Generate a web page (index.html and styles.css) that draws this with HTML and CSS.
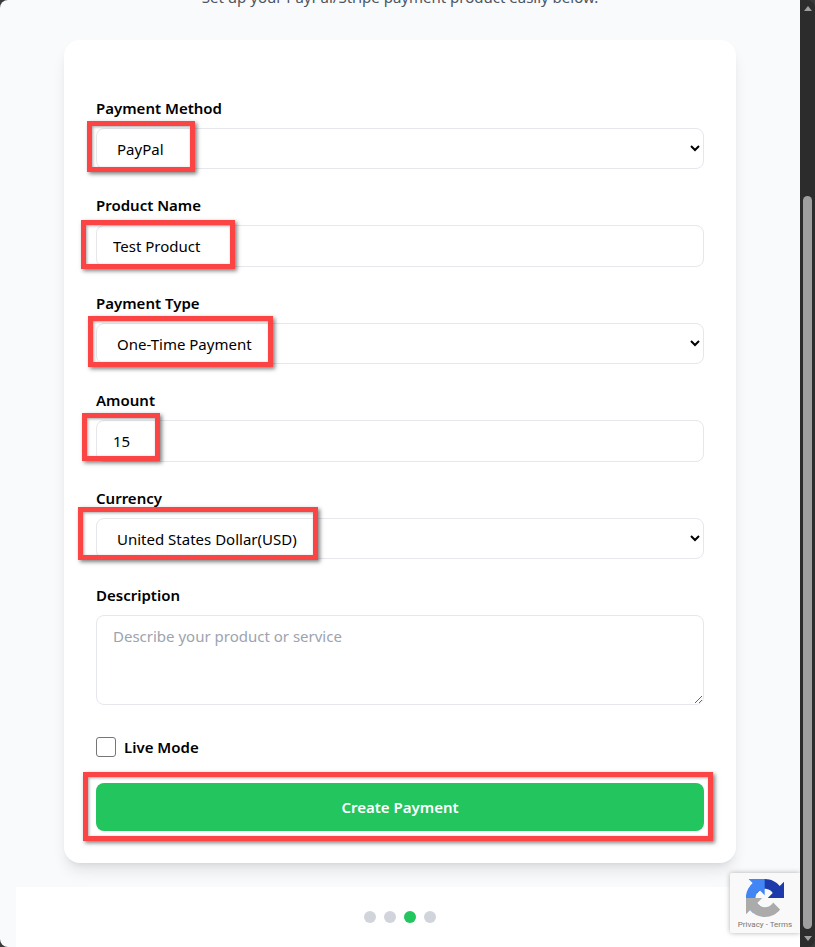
FILE: index.html
```html
<!DOCTYPE html>
<html lang="en">
<head>
    <meta charset="UTF-8">
    <meta name="viewport" content="width=device-width, initial-scale=1.0">
    <title>Create Payment</title>
    <link rel="stylesheet" href="styles.css">
</head>
<body>
    <div class="window">
        <main class="page">
            <p class="subtitle">Set up your PayPal/Stripe payment product easily below.</p>

            <form class="card">
                <div class="field">
                    <label for="method">Payment Method</label>
                    <select id="method"><option>PayPal</option><option>Stripe</option></select>
                </div>
                <div class="field">
                    <label for="product">Product Name</label>
                    <input id="product" type="text" value="Test Product">
                </div>
                <div class="field">
                    <label for="ptype">Payment Type</label>
                    <select id="ptype"><option>One-Time Payment</option><option>Subscription</option></select>
                </div>
                <div class="field">
                    <label for="amount">Amount</label>
                    <input id="amount" type="number" value="15">
                </div>
                <div class="field">
                    <label for="currency">Currency</label>
                    <select id="currency"><option>United States Dollar(USD)</option></select>
                </div>
                <div class="field">
                    <label for="desc">Description</label>
                    <textarea id="desc" placeholder="Describe your product or service"></textarea>
                </div>
                <label class="live"><span class="checkbox"></span>Live Mode</label>
                <button type="button" class="submit">Create Payment</button>

                <!-- red annotation boxes drawn on top of the form -->
                <span class="mark mark-method"></span>
                <span class="mark mark-product"></span>
                <span class="mark mark-type"></span>
                <span class="mark mark-amount"></span>
                <span class="mark mark-currency"></span>
                <span class="mark mark-submit"></span>
            </form>

            <div class="dots-bar">
                <span class="dot"></span>
                <span class="dot"></span>
                <span class="dot active"></span>
                <span class="dot"></span>
            </div>

            <div class="recaptcha">
                <svg class="recaptcha-logo" viewBox="0 0 64 64" width="38" height="38">
                    <path fill="#1c3aa9" d="M64 31.955l-.033-1.37V4.687l-7.16 7.16C50.948 4.674 42.033.093 32.05.093c-10.4 0-19.622 4.96-25.458 12.64l11.736 11.86a15.55 15.55 0 0 1 4.754-5.334c2.05-1.6 4.952-2.906 8.968-2.906.485 0 .86.057 1.135.163 4.976.393 9.288 3.14 11.828 7.124l-8.307 8.307 32.295.008"/>
                    <path fill="#4285f4" d="M31.577.093l-1.37.033H4.3l7.16 7.16C4.24 13.145-.344 22.06-.344 32.043c0 10.4 4.96 19.622 12.64 25.458l11.86-11.736a15.55 15.55 0 0 1-5.334-4.754c-1.6-2.05-2.906-4.952-2.906-8.968 0-.485.057-.86.163-1.135.393-4.976 3.14-9.288 7.124-11.828l8.307 8.307.008-32.295"/>
                    <path fill="#ababab" d="M.001 32.045l.033 1.37v25.898l7.16-7.16c5.86 7.173 14.774 11.754 24.76 11.754 10.4 0 19.622-4.96 25.458-12.64L45.677 39.407a15.55 15.55 0 0 1-4.754 5.334c-2.05 1.6-4.952 2.906-8.968 2.906-.485 0-.86-.057-1.135-.163-4.976-.393-9.288-3.14-11.828-7.124l8.307-8.307-32.295-.008"/>
                </svg>
                <span class="recaptcha-links">Privacy - Terms</span>
            </div>
        </main>

        <div class="scrollbar">
            <span class="arrow arrow-up"></span>
            <div class="track"><span class="thumb"></span></div>
            <span class="arrow arrow-down"></span>
        </div>
    </div>
</body>
</html>
```

FILE: styles.css
```css
* {
    box-sizing: border-box;
}

html, body {
    margin: 0;
    height: 100%;
    overflow: hidden;
}

body {
    font-family: 'Noto Sans', 'Open Sans', sans-serif;
    background: #3a3a3a;
    color: #111827;
}

.window {
    display: flex;
    height: 947px;
}

.page {
    position: relative;
    flex: 1;
    min-width: 0;
    background: #f9fafb;
    border-radius: 8px 0 0 8px;
    overflow: hidden;
}

.subtitle {
    margin: -13px 0 0;
    height: 53px;
    font-size: 15px;
    line-height: 20px;
    text-align: center;
    color: #4b5563;
}

.card {
    position: relative;
    width: 672px;
    height: 823px;
    margin: 0 0 0 64px;
    padding: 58px 32px 0;
    background: #fff;
    border-radius: 16px;
    box-shadow: 0 10px 15px -3px rgba(0, 0, 0, 0.1), 0 4px 6px -4px rgba(0, 0, 0, 0.1);
}

.field {
    margin-bottom: 26px;
}

.field label {
    display: block;
    height: 20px;
    margin-bottom: 10px;
    font-size: 15px;
    line-height: 20px;
    font-weight: 600;
    color: #000;
}

.field select,
.field input,
.field textarea {
    display: block;
    width: 100%;
    height: 42px;
    padding: 0 16px;
    border: 1px solid #e5e7eb;
    border-radius: 8px;
    background-color: #fff;
    font-family: inherit;
    font-size: 15px;
    color: #000;
    outline: none;
}

.field select {
    height: 41px;
    padding-left: 20px;
    margin-bottom: 1px;
    appearance: none;
    background-image: url("data:image/svg+xml,%3Csvg xmlns='http://www.w3.org/2000/svg' width='10' height='7'%3E%3Cpath d='M1 1l4 4 4-4' fill='none' stroke='%23000' stroke-width='2'/%3E%3C/svg%3E");
    background-repeat: no-repeat;
    background-position: right 3px center;
}

.field input[type="number"] {
    appearance: textfield;
}

.field textarea {
    height: 90px;
    padding-top: 10px;
    resize: vertical;
}

.field textarea::placeholder {
    color: #9ca3af;
}

.live {
    display: flex;
    align-items: center;
    gap: 8px;
    height: 20px;
    margin-top: 32px;
    font-size: 15px;
    font-weight: 600;
    color: #000;
}

.checkbox {
    width: 20px;
    height: 20px;
    border: 1px solid #767676;
    border-radius: 3px;
    background: #fff;
}

.submit {
    display: block;
    width: 100%;
    height: 48px;
    margin-top: 26px;
    border: none;
    border-radius: 8px;
    background: #22c55e;
    color: #fff;
    font-family: inherit;
    font-size: 15px;
    font-weight: 600;
    cursor: pointer;
}

.mark {
    position: absolute;
    border: 5px solid #fb4444;
    box-shadow: 2px 2px 4px rgba(0, 0, 0, 0.5), inset 1px 1px 3px rgba(0, 0, 0, 0.35);
    pointer-events: none;
}

.mark-method { left: 23px; top: 81px; width: 108px; height: 51px; }
.mark-product { left: 17px; top: 180px; width: 154px; height: 49px; }
.mark-type { left: 24px; top: 276px; width: 185px; height: 51px; }
.mark-amount { left: 18px; top: 373px; width: 78px; height: 48px; }
.mark-currency { left: 14px; top: 467px; width: 240px; height: 53px; }
.mark-submit { left: 19px; top: 732px; width: 630px; height: 69px; }

.dots-bar {
    display: flex;
    justify-content: center;
    align-items: center;
    gap: 8px;
    height: 60px;
    margin: 24px 0 0 16px;
    padding-right: 16px;
    background: #fff;
}

.dot {
    width: 12px;
    height: 12px;
    border-radius: 50%;
    background: #d1d5db;
}

.dot.active {
    background: #22c55e;
}

.recaptcha {
    position: absolute;
    right: 0;
    top: 873px;
    width: 70px;
    height: 60px;
    display: flex;
    flex-direction: column;
    align-items: center;
    padding-top: 6px;
    background: #f9f9f9;
    border-radius: 2px 0 0 2px;
    box-shadow: 0 0 5px rgba(128, 128, 128, 0.6);
}

.recaptcha-logo {
    display: block;
    flex: none;
}

.recaptcha-links {
    font-family: 'Roboto', sans-serif;
    font-size: 8px;
    line-height: 11px;
    margin-top: 2px;
    color: #777;
    white-space: nowrap;
}

.scrollbar {
    display: flex;
    flex-direction: column;
    align-items: center;
    width: 15px;
    background: #2c2c2c;
    border-radius: 0 8px 8px 0;
}

.arrow {
    flex: none;
    width: 0;
    height: 0;
    border-left: 4.5px solid transparent;
    border-right: 4.5px solid transparent;
}

.arrow-up {
    margin: 6px 0 7px;
    border-bottom: 5px solid #a0a0a0;
}

.arrow-down {
    margin: 7px 0 6px;
    border-top: 5px solid #a0a0a0;
}

.track {
    flex: 1;
    width: 100%;
    display: flex;
    flex-direction: column;
    justify-content: flex-end;
    align-items: center;
}

.thumb {
    width: 9px;
    height: 733px;
    background: #9f9f9f;
    border-radius: 5px;
}
```
